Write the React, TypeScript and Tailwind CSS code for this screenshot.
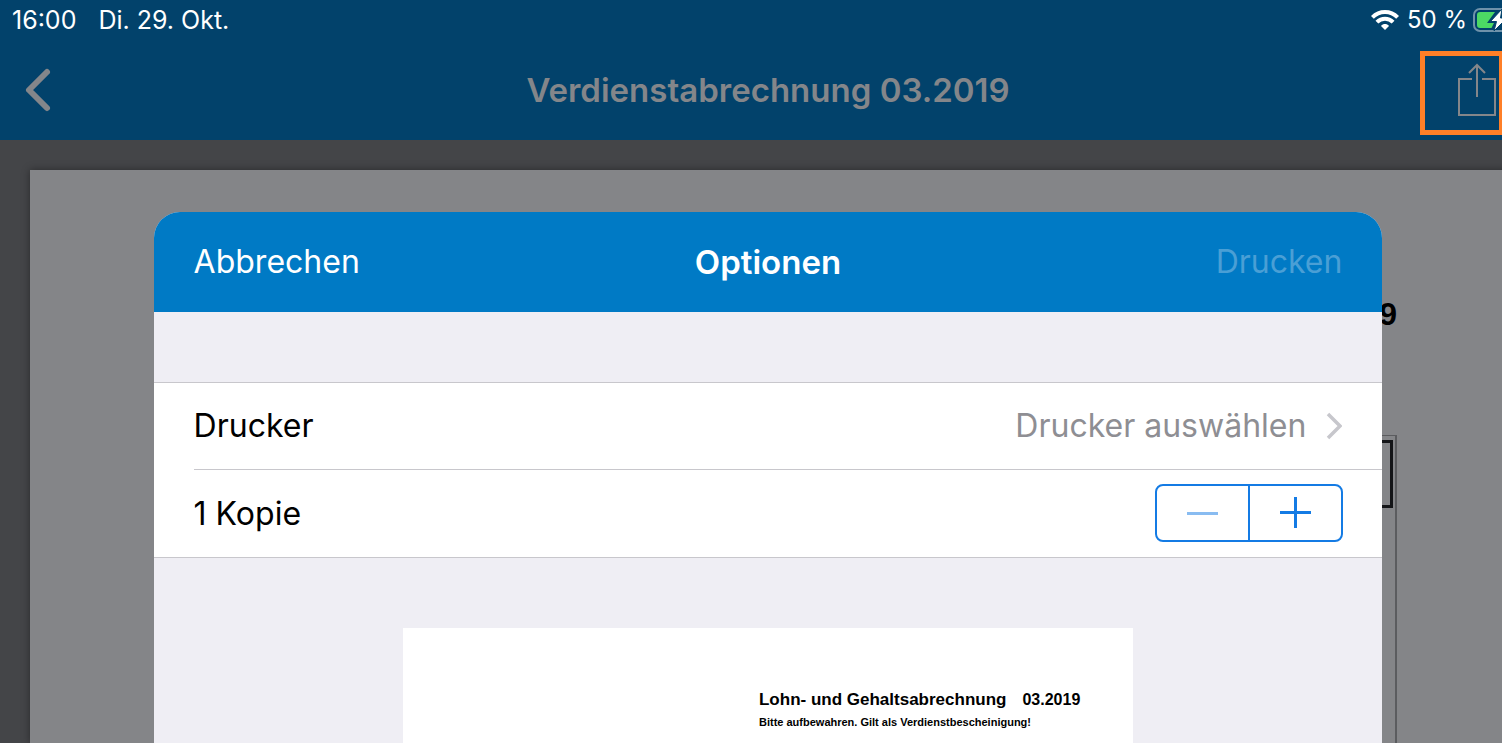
import React, { useState } from "react";

function WifiIcon() {
  return (
    <svg viewBox="0 0 28 20" className="mr-0.5 w-7 h-5" fill="none" stroke="white" strokeWidth="4" aria-hidden="true">
      <path d="M1.4 7.4C8.4 0.3 19.6 0.3 26.6 7.4" />
      <path d="M5.9 12.2c4.6-4.6 11.6-4.6 16.2 0" />
      <path d="M14 20l-4-4.1c2.2-2.4 5.8-2.4 8 0z" fill="white" stroke="none" />
    </svg>
  );
}

function BatteryIcon() {
  return (
    <svg viewBox="0 0 50 24" className="w-[50px] h-6" fill="none" aria-hidden="true">
      <rect x="1" y="1" width="43" height="22" rx="6" stroke="#6f92aa" strokeWidth="2" />
      <path d="M7 4h15L14 15h7L18.5 20H7a3 3 0 0 1-3-3V7a3 3 0 0 1 3-3z" fill="#4cd964" />
      <path d="M29 1L17.5 13.5h6L21 23l13-13h-6.5z" fill="white" stroke="#02426b" strokeWidth="1" />
    </svg>
  );
}

function ShareIcon() {
  return (
    <svg viewBox="0 0 40 56" className="w-10 h-14" fill="none" stroke="#84868a" strokeWidth="2" aria-hidden="true">
      <path d="M15 17H2v36h36V17H25" />
      <path d="M20 35V3M12 11l8-8 8 8" />
    </svg>
  );
}

export default function App() {
  const [copies, setCopies] = useState(1);

  return (
    <div className="min-h-screen flex flex-col overflow-hidden bg-white pb-1.5 font-['Inter','Liberation_Sans',sans-serif]">
      <div className="w-[calc(100%+34px)] flex-1 flex flex-col bg-[#444548]">
        <header className="h-[140px] bg-[#02426b]">
          <div className="h-10 flex items-center justify-between pl-3 pr-[13px] text-white">
            <div className="flex gap-[22px] text-[25px] leading-10">
              <span>16:00</span>
              <span>Di. 29. Okt.</span>
            </div>
            <div className="flex items-center gap-1.5 text-2xl">
              <WifiIcon />
              <span className="whitespace-nowrap">50 %</span>
              <BatteryIcon />
            </div>
          </div>
          <div className="h-[100px] grid grid-cols-[1fr_auto_1fr] items-center">
            <button aria-label="Zurück" className="ml-5 w-9 h-12 flex items-center justify-center">
              <svg viewBox="0 0 36 48" className="w-9 h-12" fill="none" stroke="#84868a" strokeWidth="6" strokeLinecap="round" strokeLinejoin="round" aria-hidden="true">
                <path d="M27 6L9 24l18 18" />
              </svg>
            </button>
            <h1 className="text-[33px] leading-10 font-semibold text-[#84868a]">Verdienstabrechnung 03.2019</h1>
            <button aria-label="Teilen" className="justify-self-end mr-8 mt-1.5 w-[84px] h-[84px] border-5 border-[#ff7f27] flex items-center justify-end pb-1.5 pr-0.5">
              <ShareIcon />
            </button>
          </div>
        </header>

        <main className="relative flex-1 flex flex-col overflow-hidden pt-[30px] pl-[30px]">
          <article className="flex-1 flex flex-col bg-[#848588] pl-[140px] pr-[139px] pt-[126px] shadow-[0_0_8px_rgba(0,0,0,0.4)]">
            <p className="text-right text-[32px] leading-9 font-bold text-black font-['Liberation_Sans',sans-serif]">9</p>
            <div className="mt-[103px] flex-1 border-t border-r-2 border-[#5b5c5f] pt-1 pr-0.5">
              <div className="h-[68px] border-y-3 border-r-3 border-[#141518]" />
            </div>
          </article>

          <section role="dialog" aria-label="Optionen" className="absolute inset-x-0 top-[72px] bottom-0 mx-auto w-4/5 flex flex-col overflow-hidden rounded-t-[26px] bg-[#efeef4]">
            <div className="h-[100px] grid grid-cols-3 items-center px-10 bg-[#007ac5] text-white text-[32px] leading-[42px]">
              <button className="justify-self-start">Abbrechen</button>
              <h2 className="text-center text-[33px] leading-10 font-semibold">Optionen</h2>
              <button disabled className="justify-self-end text-[#4a9fd5]">Drucken</button>
            </div>

            <div className="mt-[70px] pl-10 bg-white border-y border-[#c8c7cc] text-[32px] leading-[42px] text-black">
              <button className="w-full h-[87px] flex items-center pr-10 border-b border-[#c8c7cc]">
                <span>Drucker</span>
                <span className="ml-auto text-[#8e8e93]">Drucker auswählen</span>
                <svg viewBox="0 0 16 28" className="ml-5 w-4 h-7" fill="none" stroke="#c7c7cc" strokeWidth="3.5" aria-hidden="true">
                  <path d="M2 2l12 12L2 26" />
                </svg>
              </button>
              <div className="h-[87px] flex items-center justify-between pr-[39px]">
                <span>{copies} {copies === 1 ? "Kopie" : "Kopien"}</span>
                <div className="mb-0.5 w-[188px] h-[58px] flex rounded-lg border-2 border-[#147be4] text-[#147be4]">
                  <button disabled={copies === 1} onClick={() => setCopies(copies - 1)} aria-label="Weniger Kopien" className="flex-1 flex items-center justify-center disabled:text-[#89bcf1]">
                    <svg viewBox="0 0 32 32" className="w-8 h-8" stroke="currentColor" strokeWidth="3" aria-hidden="true">
                      <path d="M0 16.5h31" />
                    </svg>
                  </button>
                  <button onClick={() => setCopies(copies + 1)} aria-label="Mehr Kopien" className="flex-1 flex items-center justify-center border-l-2 border-[#147be4]">
                    <svg viewBox="0 0 32 32" className="w-8 h-8" stroke="currentColor" strokeWidth="3" aria-hidden="true">
                      <path d="M0 15.5h31M15.5 0v31" />
                    </svg>
                  </button>
                </div>
              </div>
            </div>

            <div className="mt-[70px] mx-auto w-[730px] flex-1 bg-white pt-[62px] pl-[356px] text-black font-bold whitespace-nowrap font-['Liberation_Sans',sans-serif]">
              <div className="flex gap-4 leading-5">
                <span className="text-[17px]">Lohn- und Gehaltsabrechnung</span>
                <span className="text-base leading-5">03.2019</span>
              </div>
              <p className="text-[11px] leading-6">Bitte aufbewahren. Gilt als Verdienstbescheinigung!</p>
            </div>
          </section>
        </main>
      </div>
    </div>
  );
}
